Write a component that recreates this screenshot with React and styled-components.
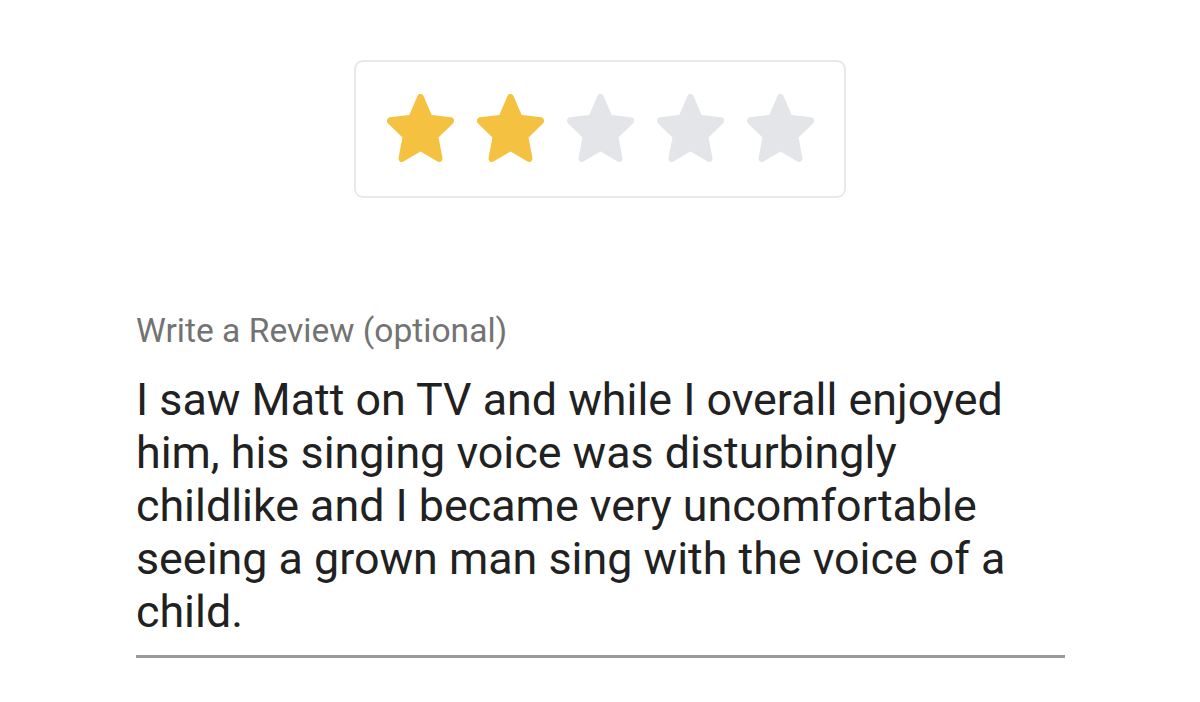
import React from 'react';
import styled, { createGlobalStyle } from 'styled-components';

const GlobalStyle = createGlobalStyle`
  html, body {
    margin: 0;
    padding: 0;
    background: #ffffff;
  }
  body {
    font-family: Roboto, "Noto Sans", sans-serif;
  }
`;

const Page = styled.div`
  width: 1200px;
  height: 702px;
  display: flex;
  flex-direction: column;
  align-items: center;
  padding-top: 60px;
  box-sizing: border-box;
`;

const RatingBox = styled.div`
  display: flex;
  gap: 23px;
  padding: 32px 30px 34px 31px;
  border: 2px solid #e9e9ea;
  border-radius: 9px;
`;

const StarButton = styled.button`
  border: 0;
  padding: 0;
  background: none;
  width: 67px;
  height: 68px;
  display: flex;
  cursor: pointer;
`;

const Form = styled.div`
  align-self: flex-start;
  width: 929px;
  margin-top: 115px;
  margin-left: 136px;
  display: flex;
  flex-direction: column;
`;

const Label = styled.div`
  font-size: 33.6px;
  line-height: 36px;
  color: #737373;
`;

const ReviewText = styled.div`
  margin-top: 24px;
  font-size: 44.8px;
  line-height: 53px;
  color: #212121;
  padding-bottom: 17px;
  border-bottom: 3px solid #9a9a9a;
`;

// rounded five-point star, fitted to its own bounding box
const R = 48;
const r = 23;
const SW = 10;
const starPoints = (() => {
  const pts = [];
  for (let i = 0; i < 10; i++) {
    const a = (Math.PI / 5) * i - Math.PI / 2;
    const rad = i % 2 === 0 ? R : r;
    pts.push(`${(rad * Math.cos(a)).toFixed(2)},${(rad * Math.sin(a)).toFixed(2)}`);
  }
  return pts.join(' ');
})();
const halfW = R * Math.sin((2 * Math.PI) / 5) + SW / 2;
const top = -R - SW / 2;
const height = R + R * Math.cos(Math.PI / 5) + SW;
const viewBox = `${-halfW} ${top} ${2 * halfW} ${height}`;

const Star = ({ filled }) => {
  const color = filled ? '#f5c140' : '#e4e5e9';
  return (
    <StarButton aria-label="star">
      <svg width="67" height="68" viewBox={viewBox} preserveAspectRatio="none">
        <polygon
          points={starPoints}
          fill={color}
          stroke={color}
          strokeWidth={SW}
          strokeLinejoin="round"
        />
      </svg>
    </StarButton>
  );
};

export default function App() {
  const rating = 2;
  return (
    <>
      <GlobalStyle />
      <Page>
        <RatingBox>
          {[1, 2, 3, 4, 5].map((n) => (
            <Star key={n} filled={n <= rating} />
          ))}
        </RatingBox>
        <Form>
          <Label>Write a Review (optional)</Label>
          <ReviewText>
            I saw Matt on TV and while I overall enjoyed him, his singing voice was
            disturbingly childlike and I became very uncomfortable seeing a grown man
            sing with the voice of a child.
          </ReviewText>
        </Form>
      </Page>
    </>
  );
}
